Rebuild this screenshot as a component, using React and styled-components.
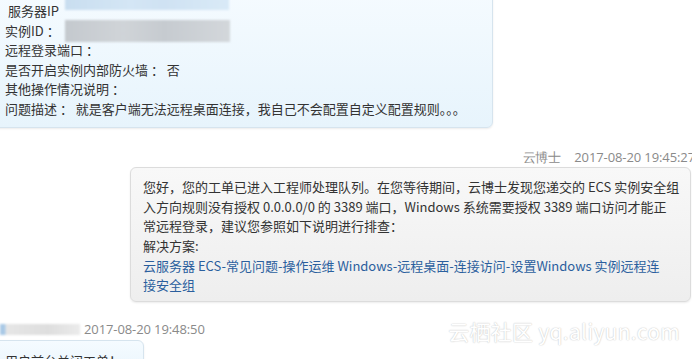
import React from "react"
import styled, { createGlobalStyle } from "styled-components"

const GlobalStyle = createGlobalStyle`
  html, body {
    margin: 0;
    padding: 0;
    background: #ffffff;
  }
  body {
    font-family: "Noto Sans CJK SC", "Liberation Sans", sans-serif;
    font-size: 13px;
    color: #333333;
    overflow: hidden;
  }
`

const Chat = styled.div`
  position: relative;
  width: 692px;
  height: 359px;
  overflow: hidden;
`

const Thread = styled.div`
  display: flex;
  flex-direction: column;
  margin-top: -10px;
`

const Bubble = styled.div`
  align-self: ${p => (p.mine ? "flex-end" : "flex-start")};
  box-sizing: border-box;
  width: ${p => p.width}px;
  margin-left: ${p => (p.mine ? 0 : -6)}px;
  margin-right: ${p => (p.mine ? 1 : 0)}px;
  margin-top: ${p => p.top || 0}px;
  padding: ${p => (p.mine ? "9px 10px 6px 12px" : "10px 10px 8px 10px")};
  line-height: 19.6px;
  white-space: nowrap;
  border: 1px solid ${p => (p.mine ? "#dcdcdc" : "#d6e4ee")};
  border-radius: 6px;
  background: ${p =>
    p.mine
      ? "linear-gradient(#f8f8f8, #eeeeee)"
      : "linear-gradient(#f5fbff, #e7f4fc)"};
  box-shadow: 0 1px 2px rgba(0, 0, 0, 0.08);
`

const Line = styled.div`
  display: flex;
  align-items: center;
  height: 19.6px;
`

const Redact = styled.span`
  display: inline-block;
  flex: none;
  width: ${p => p.w}px;
  height: ${p => p.h}px;
  margin-left: ${p => p.ml}px;
  transform: translateY(${p => p.dy}px);
  background: ${p => p.bg};
  filter: blur(1px);
`

const Meta = styled.div`
  display: flex;
  align-items: center;
  justify-content: ${p => (p.mine ? "flex-end" : "flex-start")};
  gap: 13px;
  margin-top: ${p => p.top}px;
  margin-right: ${p => (p.mine ? -3 : 0)}px;
  height: 19.6px;
  line-height: 19.6px;
  color: #8a8a8a;
  white-space: nowrap;
`

const Stamp = styled.span`
  font-family: "Open Sans", "Liberation Sans", sans-serif;
  font-size: 13px;
  letter-spacing: -0.1px;
  margin-left: ${p => p.shift || 0}px;
`

const Link = styled.a`
  color: #2b5f9e;
  text-decoration: none;
`

const Watermark = styled.div`
  position: absolute;
  right: 12px;
  top: 316px;
  font-family: "Noto Sans CJK SC", "Liberation Sans", sans-serif;
  font-size: 21px;
  color: #ffffff;
  text-shadow: 0 0 1px #c4c4c4, 0 0 2px #dddddd;
  white-space: nowrap;
  letter-spacing: 0.3px;
`

export default function App() {
  return (
    <Chat>
      <GlobalStyle />
      <Thread>
        <Bubble width={499}>
          <Line>
            &nbsp;服务器IP
            <Redact
              w={164}
              h={15}
              ml={6}
              dy={-8}
              bg="linear-gradient(90deg, #c9def0, #d4e6f5 40%, #cfe2f3 60%, #d9eaf7)"
            />
          </Line>
          <Line>
            实例ID ：
            <Redact
              w={165}
              h={22}
              ml={5}
              dy={1}
              bg="linear-gradient(90deg, #c4c9ce, #d0d4d8 35%, #c6cbd0 60%, #d3d7db)"
            />
          </Line>
          <Line>远程登录端口 ：</Line>
          <Line>是否开启实例内部防火墙 ： 否</Line>
          <Line>其他操作情况说明 ：</Line>
          <Line>问题描述 ： 就是客户端无法远程桌面连接，我自己不会配置自定义配置规则。。。</Line>
        </Bubble>

        <Meta mine top={20}>
          <Stamp>云博士</Stamp>
          <Stamp>2017-08-20 19:45:27</Stamp>
        </Meta>
        <Bubble mine width={561}>
          <div>您好，您的工单已进入工程师处理队列。在您等待期间，云博士发现您递交的 ECS 实例安全组</div>
          <div>入方向规则没有授权 0.0.0.0/0 的 3389 端口，Windows 系统需要授权 3389 端口访问才能正</div>
          <div>常远程登录，建议您参照如下说明进行排查：</div>
          <div>解决方案:</div>
          <Link href="#">
            云服务器 ECS-常见问题-操作运维 Windows-远程桌面-连接访问-设置Windows 实例远程连
            <br />
            接安全组
          </Link>
        </Bubble>

        <Meta top={18}>
          <Redact
            w={80}
            h={11}
            ml={0}
            dy={0}
            bg="linear-gradient(90deg, #a9c9e6 0 5px, #e6e6e6 6px, #dedede 60%, #ebebeb)"
          />
          <Stamp shift={-9}>2017-08-20 19:48:50</Stamp>
        </Meta>
        <Bubble width={150} top={1}>
          <div>用户前台关闭工单！</div>
        </Bubble>
      </Thread>
      <Watermark>云栖社区 yq.aliyun.com</Watermark>
    </Chat>
  )
}
